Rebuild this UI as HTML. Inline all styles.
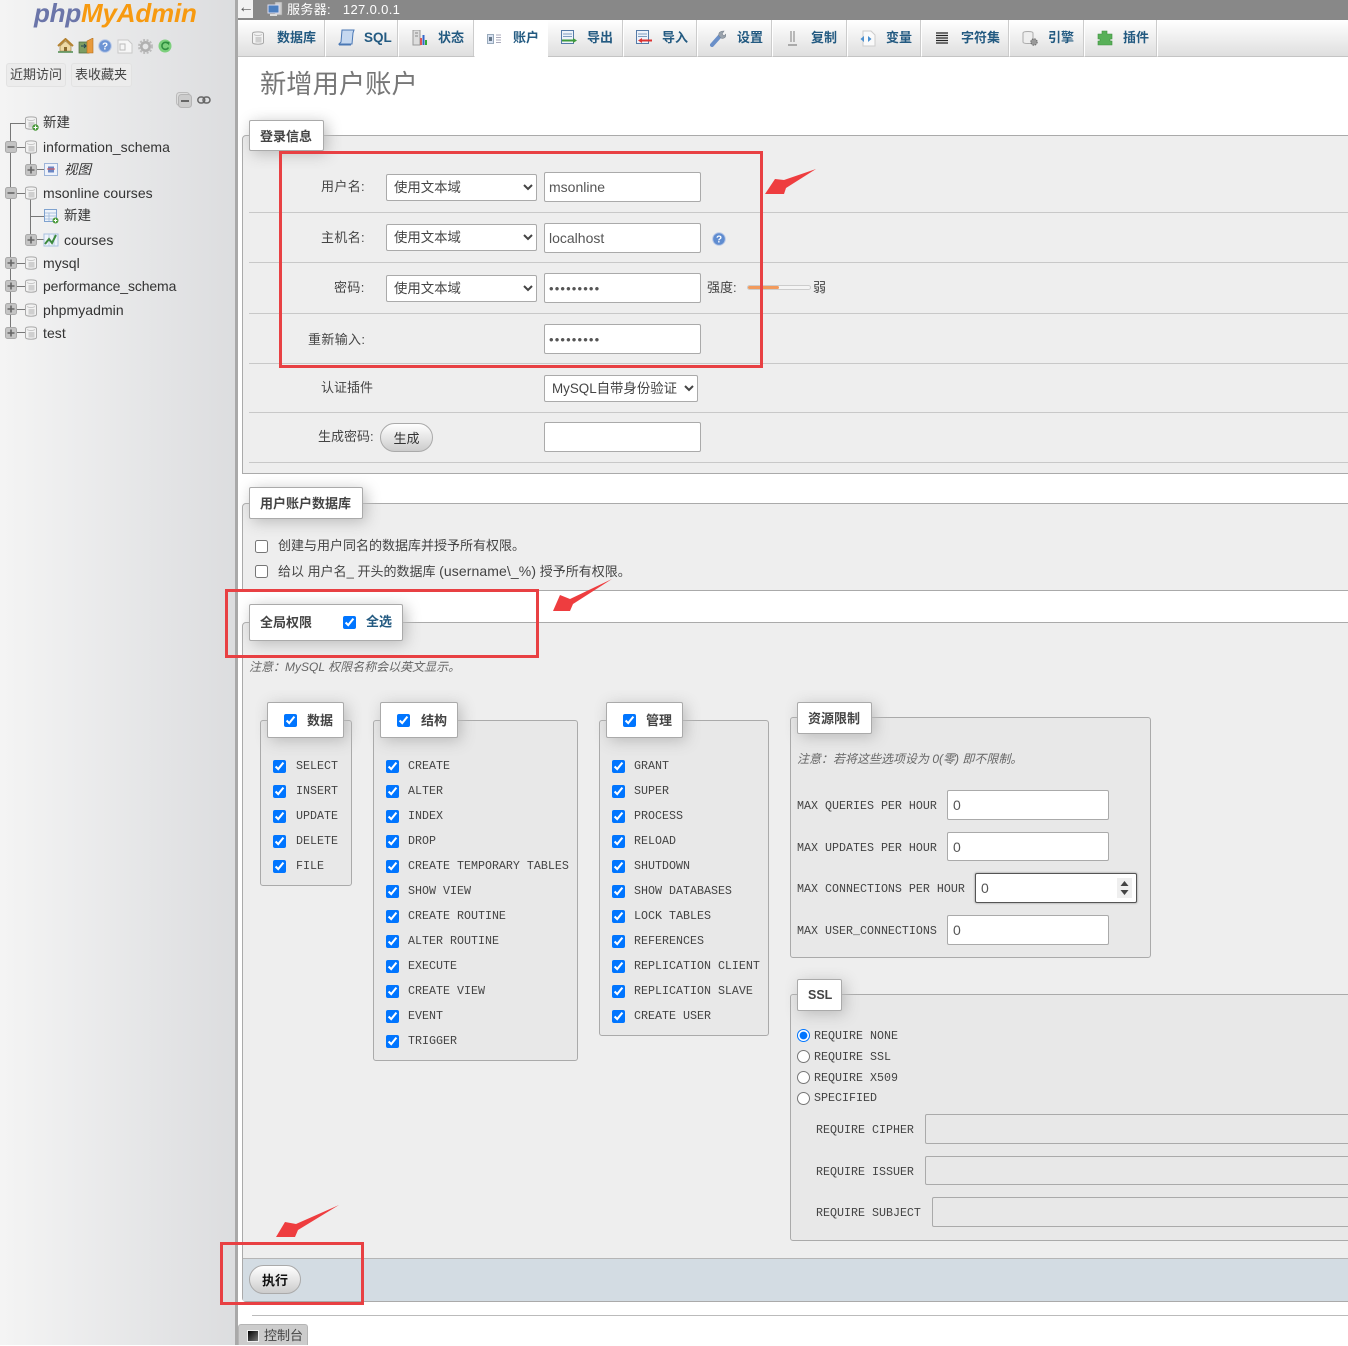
<!DOCTYPE html>
<html lang="zh"><head><meta charset="utf-8"><title>phpMyAdmin</title>
<style>
html,body{margin:0;padding:0;background:#fff}
body{position:relative;width:1348px;height:1345px;overflow:hidden;font:13px/20px "Liberation Sans","Noto Sans CJK SC",sans-serif;color:#444}
.a,.t,svg,input,select,button{position:absolute}
.t{white-space:nowrap}
.m{font-family:"Liberation Mono","Noto Sans CJK SC",monospace;font-size:11.67px;color:#444;margin-top:1px}
.tree{font-size:14px;color:#333;letter-spacing:.05px}
.tab{position:absolute;top:20px;height:36px;background:linear-gradient(#fff,#dfdfdf);border-right:1px solid #fff;box-shadow:inset -1px 0 0 #ccc;border-bottom:1px solid #c4c4c4}
.tb{font-weight:700;color:#235a81;font-size:13px;top:28px}
.fs{position:absolute;background:#eee;border:1px solid #aaa;border-radius:4px 0 0 0;box-sizing:border-box}
.sub{background:#e8e8e8;border-radius:3px}
.lg{position:absolute;background:#fff;border:1px solid #aaa;border-radius:2px;box-shadow:3px 3px 15px #bbb;box-sizing:border-box;font-weight:700;color:#444;font-size:13px}
.line{position:absolute;left:249px;right:0;height:1px;background:#c8c8c8}
input[type=text],input[type=password]{box-sizing:border-box;border:1px solid #aaa;border-radius:2px;background:#fff;color:#555;font:14px "Liberation Sans",sans-serif;padding:0 4px;margin:0;outline:0}
input[type=password]{font-size:13px;letter-spacing:1.15px}
input.d{background:#e8e8e8}
input.n{padding-left:5px}
input[type=checkbox],input[type=radio]{margin:0;width:13px;height:13px}
select{box-sizing:border-box;border:1px solid #aaa;border-radius:2px;background:#fff;color:#444;font:13.4px "Liberation Sans","Noto Sans CJK SC",sans-serif;padding:0 3px;margin:0}
button{border:1px solid #aaa;border-radius:15px;background:linear-gradient(#fff,#ccc);font:13px "Liberation Sans","Noto Sans CJK SC",sans-serif;color:#333;padding:0;margin:0}
.box{position:absolute;border:3px solid #e84043;box-sizing:border-box}
.tl{position:absolute;background:#777}
i.note{font-style:italic;color:#666;font-size:12px}
</style></head><body>
<svg width="0" height="0" style="position:absolute"><defs>
<symbol id="db" viewBox="0 0 12 14"><path d="M.5 2.500C.5.300 11.500.300 11.500 2.500V11.500C11.500 13.800.5 13.800.5 11.500Z" fill="#f2f2f2" stroke="#aaa"/><path d="M2 3.500C4 5 8 5 10 3.500" fill="none" stroke="#c4c4c4"/><path d="M3.500 6h6v5.500H3.500z" fill="#cfcfcf"/></symbol>
<symbol id="pl" viewBox="0 0 12 12"><rect x=".5" y=".5" width="11" height="11" rx="2" fill="#c4c4c4" stroke="#aaa"/><path d="M2.500 6h7M6 2.500v7" stroke="#666" stroke-width="1.600"/></symbol>
<symbol id="mi" viewBox="0 0 12 12"><rect x=".5" y=".5" width="11" height="11" rx="2" fill="#c4c4c4" stroke="#aaa"/><path d="M2.500 6h7" stroke="#666" stroke-width="1.600"/></symbol>
<symbol id="add" viewBox="0 0 7 7"><circle cx="3.500" cy="3.500" r="3.200" fill="#4a9a3a"/><path d="M1.500 3.500h4M3.500 1.500v4" stroke="#fff"/></symbol>
</defs></svg>

<!-- sidebar -->
<div class="a" style="left:0;top:0;width:235px;height:1345px;background:linear-gradient(90deg,#f4f4f4,#dcdddf)"></div>
<div class="a" style="left:235px;top:0;width:3px;height:1345px;background:#a9a9a9"></div>
<div class="t" style="left:34px;top:-4px;font:italic 700 26px/34px 'Liberation Sans',sans-serif;letter-spacing:-.2px"><span style="color:#6b75a9">php</span><span style="color:#f79a10">MyAdmin</span></div>

<svg style="left:57px;top:38px" width="17" height="15" viewBox="0 0 17 15"><path d="M1 8 8.500 1 16 8" fill="none" stroke="#b5822f" stroke-width="2"/><path d="M3 8 8.500 3 14 8v5H3z" fill="#eed9a6" stroke="#9a7a3a" stroke-width=".6"/><path d="M7 9h3v4H7z" fill="#8a6a2f"/><path d="M1 14h15" stroke="#4e8a4e" stroke-width="1.500"/></svg>
<svg style="left:78px;top:38px" width="16" height="16" viewBox="0 0 16 16"><path d="M1 4h10v11H1z" fill="#7d9d63" stroke="#4d6d3d" stroke-width=".7"/><path d="M9 3l6-3v15H9z" fill="#e89a3c" stroke="#b36f1d" stroke-width=".6"/><path d="M3 8h5M6 6l2 2-2 2" stroke="#245" fill="none"/></svg>
<svg style="left:98px;top:39px" width="14" height="14" viewBox="0 0 14 14"><circle cx="7" cy="7" r="6.300" fill="#6d94d4" stroke="#b8c8e6"/><text x="7" y="10.500" text-anchor="middle" font-size="10" font-weight="700" fill="#fff" font-family="Liberation Sans">?</text></svg>
<svg style="left:117px;top:38px" width="16" height="16" viewBox="0 0 16 16"><path d="M1 2h10l4 4v9H1z" fill="#f6f6f6" stroke="#c8c8c8"/><path d="M3 6h5v6H3z" fill="none" stroke="#bbb"/></svg>
<svg style="left:138px;top:39px" width="15" height="15" viewBox="0 0 15 15"><circle cx="7.500" cy="7.500" r="4.200" fill="none" stroke="#b0b0b0" stroke-width="2.600"/><circle cx="7.500" cy="7.500" r="6.500" fill="none" stroke="#bbb" stroke-width="2" stroke-dasharray="2 1.500"/></svg>
<svg style="left:158px;top:39px" width="14" height="14" viewBox="0 0 14 14"><circle cx="7" cy="7" r="6.500" fill="#7dd07d"/><path d="M10 4.500A3.500 3.500 0 1 0 10.500 8.500" fill="none" stroke="#2f8f3f" stroke-width="1.600"/><path d="M8 2.500l3.500.5-.5 3.500z" fill="#2f8f3f"/></svg>

<div class="a" style="left:6px;top:63px;width:60px;height:24px;background:#ececec;border:1px solid #e2e2e2;border-radius:3px;box-sizing:border-box"></div>
<div class="a" style="left:71px;top:63px;width:61px;height:24px;background:#ececec;border:1px solid #e2e2e2;border-radius:3px;box-sizing:border-box"></div>
<div class="t" style="left:10px;top:65px;color:#444">近期访问</div>
<div class="t" style="left:75px;top:65px;color:#444">表收藏夹</div>
<svg style="left:176px;top:92px" width="16" height="16" viewBox="0 0 16 16"><rect x=".5" y=".5" width="13" height="13" rx="3" fill="#ddd" stroke="#bbb"/><rect x="2.500" y="2.500" width="13" height="13" rx="3" fill="#ccc" stroke="#b5b5b5"/><path d="M5 9h8" stroke="#666" stroke-width="2"/></svg>
<svg style="left:197px;top:96px" width="14" height="8" viewBox="0 0 14 8"><rect x=".8" y="1" width="7" height="6" rx="3" fill="none" stroke="#666" stroke-width="1.500"/><rect x="6" y="1" width="7" height="6" rx="3" fill="none" stroke="#666" stroke-width="1.500"/></svg>

<div class="tl" style="left:10px;top:123px;width:1px;height:210px"></div>
<div class="tl" style="left:10px;top:123px;width:15px;height:1px"></div>
<div class="tl" style="left:30px;top:147px;width:1px;height:23px"></div>
<div class="tl" style="left:30px;top:193px;width:1px;height:47px"></div>
<div class="tl" style="left:17px;top:147px;width:8px;height:1px"></div>
<div class="tl" style="left:17px;top:193px;width:8px;height:1px"></div>
<div class="tl" style="left:17px;top:263px;width:8px;height:1px"></div>
<div class="tl" style="left:17px;top:286px;width:8px;height:1px"></div>
<div class="tl" style="left:17px;top:309px;width:8px;height:1px"></div>
<div class="tl" style="left:17px;top:332px;width:8px;height:1px"></div>
<div class="tl" style="left:30px;top:216px;width:14px;height:1px"></div>
<div class="tl" style="left:37px;top:169px;width:7px;height:1px"></div>
<div class="tl" style="left:37px;top:239px;width:7px;height:1px"></div>

<svg style="left:25px;top:116px" width="12" height="14"><use href="#db" width="12" height="14"/></svg><svg style="left:32px;top:124px" width="7" height="7"><use href="#add" width="7" height="7"/></svg>
<svg style="left:25px;top:140px" width="12" height="14"><use href="#db" width="12" height="14"/></svg>
<svg style="left:25px;top:186px" width="12" height="14"><use href="#db" width="12" height="14"/></svg>
<svg style="left:25px;top:256px" width="12" height="14"><use href="#db" width="12" height="14"/></svg>
<svg style="left:25px;top:279px" width="12" height="14"><use href="#db" width="12" height="14"/></svg>
<svg style="left:25px;top:303px" width="12" height="14"><use href="#db" width="12" height="14"/></svg>
<svg style="left:25px;top:326px" width="12" height="14"><use href="#db" width="12" height="14"/></svg>
<svg style="left:5px;top:141px" width="12" height="12"><use href="#mi" width="12" height="12"/></svg>
<svg style="left:5px;top:187px" width="12" height="12"><use href="#mi" width="12" height="12"/></svg>
<svg style="left:5px;top:257px" width="12" height="12"><use href="#pl" width="12" height="12"/></svg>
<svg style="left:5px;top:280px" width="12" height="12"><use href="#pl" width="12" height="12"/></svg>
<svg style="left:5px;top:303px" width="12" height="12"><use href="#pl" width="12" height="12"/></svg>
<svg style="left:5px;top:327px" width="12" height="12"><use href="#pl" width="12" height="12"/></svg>
<svg style="left:25px;top:164px" width="12" height="12"><use href="#pl" width="12" height="12"/></svg>
<svg style="left:25px;top:234px" width="12" height="12"><use href="#pl" width="12" height="12"/></svg>
<svg style="left:44px;top:163px" width="14" height="13" viewBox="0 0 14 13"><rect x=".5" y=".5" width="13" height="12" fill="#eef2fa" stroke="#9db4d8"/><rect x="4" y="3.500" width="6" height="6" fill="#6a86c4"/><path d="M3 6h8" stroke="#d55"/></svg>
<svg style="left:44px;top:209px" width="15" height="15" viewBox="0 0 15 15"><rect x=".5" y=".5" width="12" height="12" fill="#eef3fa" stroke="#7fa2cf"/><path d="M1 4h11M1 7h11M1 10h11M5 4v8" stroke="#a9c0de"/><circle cx="11.500" cy="11.500" r="3" fill="#4a9a3a"/><path d="M9.800 11.500h3.400M11.500 9.800v3.400" stroke="#fff"/></svg>
<svg style="left:43px;top:233px" width="16" height="14" viewBox="0 0 16 14"><path d="M1 1h14v12H1z" fill="#eef3fa" stroke="#a9c0de"/><path d="M6 1v12M11 1v12" stroke="#b8cce4"/><path d="M2 11l4-5 3 4 4-8" fill="none" stroke="#3d8a3d" stroke-width="2"/></svg>

<div class="t tree" style="left:43px;top:113px;font-size:13.500px">新建</div>
<div class="t tree" style="left:43px;top:137px">information_schema</div>
<div class="t tree" style="left:64px;top:160px;font-style:italic;font-size:13.500px">视图</div>
<div class="t tree" style="left:43px;top:183px">msonline courses</div>
<div class="t tree" style="left:64px;top:206px;font-size:13.500px">新建</div>
<div class="t tree" style="left:64px;top:230px">courses</div>
<div class="t tree" style="left:43px;top:253px">mysql</div>
<div class="t tree" style="left:43px;top:276px;letter-spacing:-.12px">performance_schema</div>
<div class="t tree" style="left:43px;top:300px">phpmyadmin</div>
<div class="t tree" style="left:43px;top:323px">test</div>

<!-- top -->
<div class="a" style="left:238px;top:0;width:1110px;height:20px;background:#888"></div>
<div class="a" style="left:238px;top:0;width:15px;height:18px;background:#f2f2f2"></div>
<div class="t" style="left:238px;top:-2px;color:#555;font-size:16px">←</div>
<svg style="left:267px;top:2px" width="16" height="15" viewBox="0 0 16 15"><rect x="8" y="0" width="7" height="13" fill="#ccc" stroke="#999" stroke-width=".6"/><rect x="1" y="3" width="11" height="8" fill="#4c7fc0" stroke="#dde"/><path d="M3 13h7" stroke="#ddd" stroke-width="2"/></svg>
<div class="t" style="left:287px;top:0;color:#fff;letter-spacing:.35px">服务器:&nbsp;&nbsp; 127.0.0.1</div>

<div class="a" style="left:238px;top:20px;width:1110px;height:36px;background:linear-gradient(#fff,#dfdfdf);border-bottom:1px solid #c4c4c4;box-sizing:content-box"></div>
<div class="tab" style="left:240px;width:85px"></div>
<div class="tab" style="left:326px;width:72px"></div>
<div class="tab" style="left:400px;width:74px"></div>
<div class="a" style="left:475px;top:20px;width:73px;height:38px;background:#fff"></div>
<div class="tab" style="left:549px;width:74px"></div>
<div class="tab" style="left:624px;width:73px"></div>
<div class="tab" style="left:698px;width:74px"></div>
<div class="tab" style="left:773px;width:74px"></div>
<div class="tab" style="left:848px;width:73px"></div>
<div class="tab" style="left:922px;width:87px"></div>
<div class="tab" style="left:1010px;width:74px"></div>
<div class="tab" style="left:1085px;width:72px"></div>

<svg style="left:252px;top:31px" width="12" height="14"><use href="#db" width="12" height="14"/></svg>
<svg style="left:338px;top:29px" width="17" height="18" viewBox="0 0 17 18"><path d="M4 1h12l-1 3-1 11H1l2-2z" fill="#c5d8f0" stroke="#4a78b5"/><path d="M1 16h12" stroke="#4a78b5"/></svg>
<svg style="left:412px;top:30px" width="16" height="16" viewBox="0 0 16 16"><rect x="1" y="0" width="7" height="15" fill="#ddd" stroke="#999"/><path d="M3 3h3M3 6h3" stroke="#888"/><rect x="8" y="8" width="2" height="7" fill="#d55"/><rect x="10.500" y="5" width="2" height="10" fill="#36c"/><rect x="13" y="10" width="2" height="5" fill="#3a3"/></svg>
<svg style="left:487px;top:34px" width="15" height="10" viewBox="0 0 15 10"><rect x=".5" y=".5" width="6" height="9" fill="#d8e2f2" stroke="#9ab"/><rect x="2" y="3" width="3" height="4" fill="#678"/><path d="M9 1h5M9 3.500h5M9 6h5M9 8.500h5" stroke="#aab"/></svg>
<svg style="left:561px;top:30px" width="17" height="15" viewBox="0 0 17 15"><rect x=".5" y=".5" width="12" height="13" fill="#eef3fa" stroke="#557ba8"/><path d="M2 4h9M2 6.500h9" stroke="#7d9cc0"/><path d="M1 10.500h12" stroke="#3d9a3d" stroke-width="2"/><path d="M12 8l4 2.500-4 2.500z" fill="#3d9a3d"/></svg>
<svg style="left:636px;top:30px" width="17" height="15" viewBox="0 0 17 15"><rect x=".5" y=".5" width="12" height="13" fill="#eef3fa" stroke="#557ba8"/><path d="M2 4h9M2 6.500h9" stroke="#7d9cc0"/><path d="M5 10.500h11" stroke="#d33" stroke-width="2"/><path d="M6 8l-4 2.500L6 13z" fill="#d33"/></svg>
<svg style="left:710px;top:30px" width="16" height="17" viewBox="0 0 16 17"><path d="M2 15 10 6" stroke="#6a8fc8" stroke-width="4" stroke-linecap="round"/><path d="M9 6c-1-3 1-5 5-5l-2 3 2 2 2-2c0 4-3 5-5 4z" fill="#9aa3ad" stroke="#7a838d" stroke-width=".6"/></svg>
<svg style="left:787px;top:30px" width="11" height="17" viewBox="0 0 11 17"><path d="M4 1v11M7 1v11" stroke="#999" stroke-width="1.300"/><path d="M1 15h9" stroke="#aaa" stroke-width="2"/></svg>
<svg style="left:859px;top:30px" width="17" height="17" viewBox="0 0 17 17"><path d="M4 1h8l4 4v11H4z" fill="#fafafa" stroke="#ccc"/><path d="M5 6 1.500 9 5 12z" fill="#4a90d0"/><path d="M9 6 12.500 9 9 12z" fill="#4a90d0"/></svg>
<svg style="left:936px;top:32px" width="12" height="12" viewBox="0 0 12 12"><path d="M0 1h12M0 3.500h12M0 6h12M0 8.500h12M0 11h12" stroke="#222" stroke-width="1.200"/></svg>
<svg style="left:1022px;top:30px" width="17" height="17" viewBox="0 0 17 17"><path d="M1 3C1 1 11 1 11 3V12C11 14 1 14 1 12Z" fill="#eee" stroke="#aaa"/><circle cx="12" cy="12" r="3.200" fill="#999" stroke="#666" stroke-dasharray="1.500 1"/></svg>
<svg style="left:1097px;top:30px" width="16" height="16" viewBox="0 0 16 16"><path d="M5 1h5v3h5v5h-2v2h2v4H1v-4h2V9H1V4h4z" fill="#58b058" stroke="#3f8f3f" stroke-width=".6"/></svg>

<div class="t tb" style="left:277px">数据库</div>
<div class="t tb" style="left:364px;font-size:13.500px">SQL</div>
<div class="t tb" style="left:438px">状态</div>
<div class="t tb" style="left:513px">账户</div>
<div class="t tb" style="left:587px">导出</div>
<div class="t tb" style="left:662px">导入</div>
<div class="t tb" style="left:737px">设置</div>
<div class="t tb" style="left:811px">复制</div>
<div class="t tb" style="left:886px">变量</div>
<div class="t tb" style="left:961px">字符集</div>
<div class="t tb" style="left:1048px">引擎</div>
<div class="t tb" style="left:1123px">插件</div>

<div class="t" style="left:260px;top:67px;font-size:26.300px;line-height:34px;color:#777">新增用户账户</div>

<!-- fieldset 1 -->
<div class="fs" style="left:242px;top:135px;width:1120px;height:339px"></div>
<div class="lg" style="left:249px;top:120px;width:75px;height:31px;padding:6px 0 0 10px">登录信息</div>
<div class="line" style="top:212px"></div>
<div class="line" style="top:262px"></div>
<div class="line" style="top:313px"></div>
<div class="line" style="top:363px"></div>
<div class="line" style="top:412px"></div>
<div class="line" style="top:462px"></div>
<div class="t" style="left:321px;top:177px;letter-spacing:.35px">用户名:</div>
<div class="t" style="left:321px;top:228px;letter-spacing:.35px">主机名:</div>
<div class="t" style="left:334px;top:278px;letter-spacing:.35px">密码:</div>
<div class="t" style="left:308px;top:330px;letter-spacing:.35px">重新输入:</div>
<div class="t" style="left:321px;top:378px">认证插件</div>
<div class="t" style="left:318px;top:427px">生成密码:</div>
<select style="left:386px;top:174px;width:151px;height:27px"><option>使用文本域</option></select>
<select style="left:386px;top:224px;width:151px;height:27px"><option>使用文本域</option></select>
<select style="left:386px;top:275px;width:151px;height:27px"><option>使用文本域</option></select>
<select style="left:544px;top:375px;width:154px;height:27px"><option>MySQL自带身份验证</option></select>
<input type="text" value="msonline" style="left:544px;top:172px;width:157px;height:30px">
<input type="text" value="localhost" style="left:544px;top:223px;width:157px;height:30px">
<input type="password" value="123456789" style="left:544px;top:273px;width:157px;height:30px">
<input type="password" value="123456789" style="left:544px;top:324px;width:157px;height:30px">
<input type="text" value="" style="left:544px;top:422px;width:157px;height:30px">
<button style="left:380px;top:423px;width:53px;height:29px">生成</button>
<svg style="left:712px;top:232px" width="14" height="14" viewBox="0 0 14 14"><circle cx="7" cy="7" r="6.300" fill="#5f8cd0" stroke="#b8c8e6"/><text x="7" y="10.500" text-anchor="middle" font-size="10" font-weight="700" fill="#fff" font-family="Liberation Sans">?</text></svg>
<div class="t" style="left:707px;top:278px">强度:</div>
<div class="a" style="left:747px;top:285px;width:64px;height:5px;border:1px solid #ccc;border-radius:3px;background:#f4f4f4;box-sizing:border-box"></div>
<div class="a" style="left:748px;top:286px;width:31px;height:3px;background:#f29a5c;border-radius:2px"></div>
<div class="t" style="left:813px;top:278px">弱</div>

<!-- fieldset 2 -->
<div class="fs" style="left:242px;top:503px;width:1120px;height:88px"></div>
<div class="lg" style="left:249px;top:487px;width:114px;height:32px;padding:6px 0 0 10px">用户账户数据库</div>
<input type="checkbox" style="left:255px;top:540px">
<input type="checkbox" style="left:255px;top:565px">
<div class="t" style="left:278px;top:536px">创建与用户同名的数据库并授予所有权限。</div>
<div class="t" style="left:278px;top:561px">给以 用户名_ 开头的数据库 <span style="font-size:14px;letter-spacing:.1px">(username\_%)</span> 授予所有权限。</div>

<!-- fieldset 3 -->
<div class="fs" style="left:242px;top:622px;width:1120px;height:680px;border-radius:4px 0 0 4px"></div>
<div class="lg" style="left:249px;top:604px;width:154px;height:37px;padding:8px 0 0 10px">全局权限</div>
<input type="checkbox" checked style="left:343px;top:616px">
<div class="t" style="left:366px;top:612px;font-weight:700;color:#235a81">全选</div>
<div class="t" style="left:249px;top:657px"><i class="note">注意：MySQL 权限名称会以英文显示。</i></div>

<!-- 数据 -->
<div class="fs sub" style="left:260px;top:720px;width:92px;height:166px"></div>
<div class="lg" style="left:267px;top:702px;width:77px;height:36px;padding:8px 0 0 39px">数据</div>
<input type="checkbox" checked style="left:284px;top:714px">
<input type="checkbox" checked style="left:273px;top:760px"><div class="t m" style="left:296px;top:755px">SELECT</div>
<input type="checkbox" checked style="left:273px;top:785px"><div class="t m" style="left:296px;top:780px">INSERT</div>
<input type="checkbox" checked style="left:273px;top:810px"><div class="t m" style="left:296px;top:805px">UPDATE</div>
<input type="checkbox" checked style="left:273px;top:835px"><div class="t m" style="left:296px;top:830px">DELETE</div>
<input type="checkbox" checked style="left:273px;top:860px"><div class="t m" style="left:296px;top:855px">FILE</div>

<!-- 结构 -->
<div class="fs sub" style="left:373px;top:720px;width:205px;height:341px"></div>
<div class="lg" style="left:380px;top:702px;width:78px;height:36px;padding:8px 0 0 40px">结构</div>
<input type="checkbox" checked style="left:397px;top:714px">
<input type="checkbox" checked style="left:386px;top:760px"><div class="t m" style="left:408px;top:755px">CREATE</div>
<input type="checkbox" checked style="left:386px;top:785px"><div class="t m" style="left:408px;top:780px">ALTER</div>
<input type="checkbox" checked style="left:386px;top:810px"><div class="t m" style="left:408px;top:805px">INDEX</div>
<input type="checkbox" checked style="left:386px;top:835px"><div class="t m" style="left:408px;top:830px">DROP</div>
<input type="checkbox" checked style="left:386px;top:860px"><div class="t m" style="left:408px;top:855px">CREATE TEMPORARY TABLES</div>
<input type="checkbox" checked style="left:386px;top:885px"><div class="t m" style="left:408px;top:880px">SHOW VIEW</div>
<input type="checkbox" checked style="left:386px;top:910px"><div class="t m" style="left:408px;top:905px">CREATE ROUTINE</div>
<input type="checkbox" checked style="left:386px;top:935px"><div class="t m" style="left:408px;top:930px">ALTER ROUTINE</div>
<input type="checkbox" checked style="left:386px;top:960px"><div class="t m" style="left:408px;top:955px">EXECUTE</div>
<input type="checkbox" checked style="left:386px;top:985px"><div class="t m" style="left:408px;top:980px">CREATE VIEW</div>
<input type="checkbox" checked style="left:386px;top:1010px"><div class="t m" style="left:408px;top:1005px">EVENT</div>
<input type="checkbox" checked style="left:386px;top:1035px"><div class="t m" style="left:408px;top:1030px">TRIGGER</div>

<!-- 管理 -->
<div class="fs sub" style="left:599px;top:720px;width:170px;height:316px"></div>
<div class="lg" style="left:606px;top:702px;width:77px;height:36px;padding:8px 0 0 39px">管理</div>
<input type="checkbox" checked style="left:623px;top:714px">
<input type="checkbox" checked style="left:612px;top:760px"><div class="t m" style="left:634px;top:755px">GRANT</div>
<input type="checkbox" checked style="left:612px;top:785px"><div class="t m" style="left:634px;top:780px">SUPER</div>
<input type="checkbox" checked style="left:612px;top:810px"><div class="t m" style="left:634px;top:805px">PROCESS</div>
<input type="checkbox" checked style="left:612px;top:835px"><div class="t m" style="left:634px;top:830px">RELOAD</div>
<input type="checkbox" checked style="left:612px;top:860px"><div class="t m" style="left:634px;top:855px">SHUTDOWN</div>
<input type="checkbox" checked style="left:612px;top:885px"><div class="t m" style="left:634px;top:880px">SHOW DATABASES</div>
<input type="checkbox" checked style="left:612px;top:910px"><div class="t m" style="left:634px;top:905px">LOCK TABLES</div>
<input type="checkbox" checked style="left:612px;top:935px"><div class="t m" style="left:634px;top:930px">REFERENCES</div>
<input type="checkbox" checked style="left:612px;top:960px"><div class="t m" style="left:634px;top:955px">REPLICATION CLIENT</div>
<input type="checkbox" checked style="left:612px;top:985px"><div class="t m" style="left:634px;top:980px">REPLICATION SLAVE</div>
<input type="checkbox" checked style="left:612px;top:1010px"><div class="t m" style="left:634px;top:1005px">CREATE USER</div>

<!-- 资源限制 -->
<div class="fs sub" style="left:790px;top:717px;width:361px;height:241px"></div>
<div class="lg" style="left:797px;top:702px;width:75px;height:32px;padding:6px 0 0 10px">资源限制</div>
<div class="t" style="left:797px;top:749px"><i class="note">注意：若将这些选项设为 0(零) 即不限制。</i></div>
<div class="t m" style="left:797px;top:795px">MAX QUERIES PER HOUR</div>
<div class="t m" style="left:797px;top:837px">MAX UPDATES PER HOUR</div>
<div class="t m" style="left:797px;top:878px">MAX CONNECTIONS PER HOUR</div>
<div class="t m" style="left:797px;top:920px">MAX USER_CONNECTIONS</div>
<input type="text" class="n" value="0" style="left:947px;top:790px;width:162px;height:30px">
<input type="text" class="n" value="0" style="left:947px;top:832px;width:162px;height:29px">
<input type="text" class="n" value="0" style="left:975px;top:873px;width:162px;height:30px;border-color:#555;box-shadow:0 0 2px #888">
<div class="a" style="left:1117px;top:878px;width:15px;height:20px;background:#efefef"></div>
<svg style="left:1120px;top:881px" width="9" height="14" viewBox="0 0 9 14"><path d="M4.500 0 8.500 5H.5z" fill="#444"/><path d="M4.500 14 8.500 9H.5z" fill="#444"/></svg>
<input type="text" class="n" value="0" style="left:947px;top:915px;width:162px;height:30px">

<!-- SSL -->
<div class="fs sub" style="left:790px;top:994px;width:600px;height:247px;border-radius:3px"></div>
<div class="lg" style="left:797px;top:979px;width:45px;height:32px;padding:5px 0 0 10px;font-size:12.500px">SSL</div>
<input type="radio" name="s" checked style="left:797px;top:1029px"><div class="t m" style="left:814px;top:1025px">REQUIRE NONE</div>
<input type="radio" name="s" style="left:797px;top:1050px"><div class="t m" style="left:814px;top:1046px">REQUIRE SSL</div>
<input type="radio" name="s" style="left:797px;top:1071px"><div class="t m" style="left:814px;top:1067px">REQUIRE X509</div>
<input type="radio" name="s" style="left:797px;top:1092px"><div class="t m" style="left:814px;top:1087px">SPECIFIED</div>
<div class="t m" style="left:816px;top:1119px">REQUIRE CIPHER</div>
<div class="t m" style="left:816px;top:1161px">REQUIRE ISSUER</div>
<div class="t m" style="left:816px;top:1202px">REQUIRE SUBJECT</div>
<input type="text" class="d" style="left:925px;top:1114px;width:500px;height:30px">
<input type="text" class="d" style="left:925px;top:1156px;width:500px;height:29px">
<input type="text" class="d" style="left:932px;top:1197px;width:500px;height:30px">

<!-- footer -->
<div class="a" style="left:243px;top:1258px;width:1105px;height:43px;background:#d3dce3;border-top:1px solid #b5b5b5;box-sizing:border-box"></div>
<button style="left:249px;top:1265px;width:52px;height:29px;font-weight:700;color:#111">执行</button>
<div class="a" style="left:252px;top:1315px;width:1096px;height:1px;background:#bbb"></div>
<div class="a" style="left:238px;top:1324px;width:70px;height:21px;background:#ccc;border:1px solid #b5b5b5;border-bottom:0;border-radius:3px 3px 0 0;box-sizing:border-box"></div>
<div class="a" style="left:247px;top:1330px;width:12px;height:12px;background:linear-gradient(135deg,#000,#777);border:1px solid #eee;box-sizing:border-box"></div>
<div class="t" style="left:264px;top:1326px;color:#444">控制台</div>

<!-- annotations -->
<div class="box" style="left:279px;top:151px;width:484px;height:217px"></div>
<div class="box" style="left:225px;top:589px;width:314px;height:69px"></div>
<div class="box" style="left:220px;top:1242px;width:144px;height:63px"></div>
<svg style="left:0;top:0" width="1348" height="1345" viewBox="0 0 1348 1345">
<path d="M816 169 784 180 775 179 765 194 784 194 786 188Z" fill="#ee3d3f"/>
<path d="M612 579 570 599 560 595 553 611 570 611 573 604Z" fill="#ee3d3f"/>
<path d="M339 1205 296 1224 285 1222 276 1237 295 1237 298 1230Z" fill="#ee3d3f"/>
</svg>
</body></html>
